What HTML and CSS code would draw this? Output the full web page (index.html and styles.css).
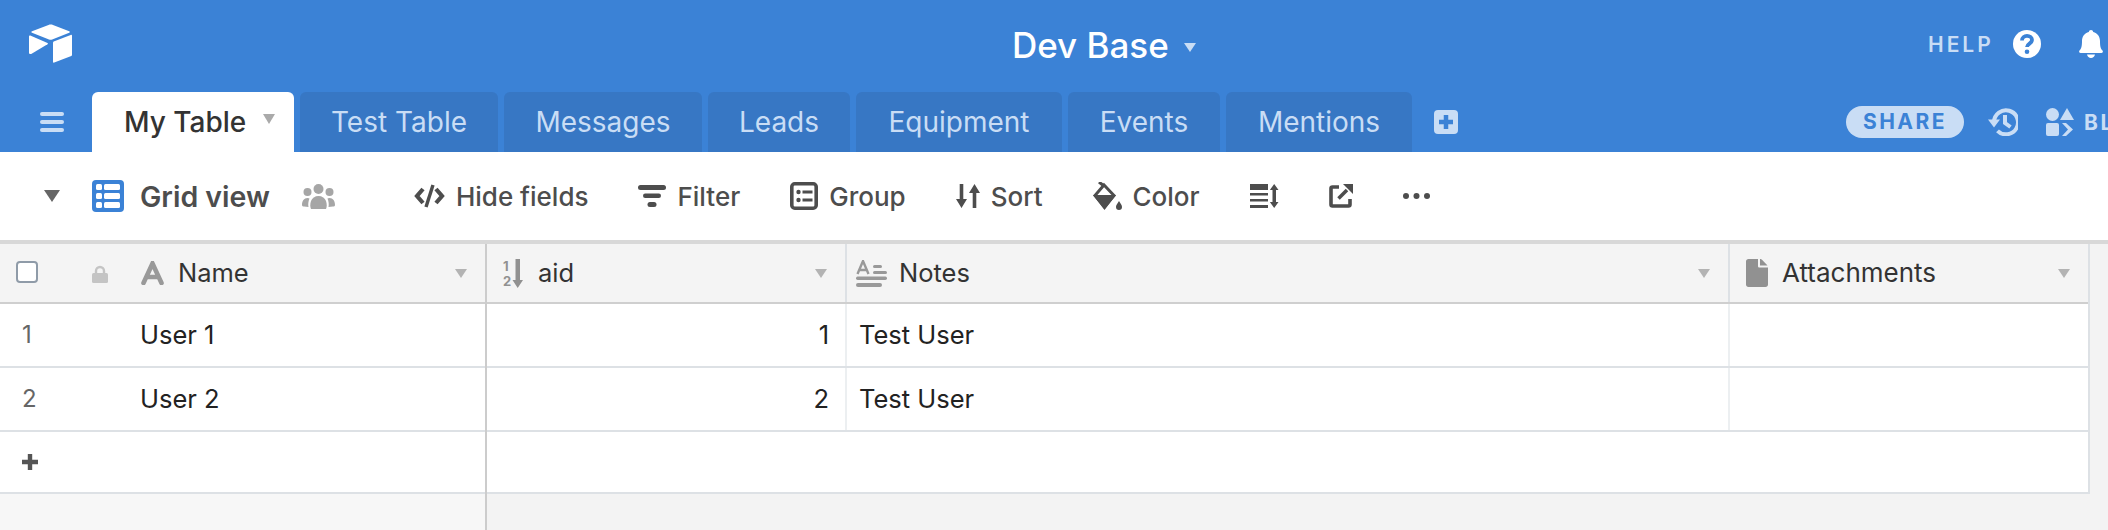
FILE: index.html
```html
<!DOCTYPE html>
<html lang="en">
<head>
  <meta charset="UTF-8">
  <title>Dev Base</title>
  <link rel="stylesheet" href="styles.css">
</head>
<body>
  <header class="topbar">
    <div class="topbar-main">
      <svg class="logo" viewBox="0 0 44 40"><path fill="#fff" d="M19.500 1 3 7.200c-.8.300-.8 1.300 0 1.600l17 6.600c1 .4 2.200.4 3.200 0l17-6.600c.8-.3.8-1.300 0-1.600L24 1c-1.500-.6-3-.6-4.500 0z"/><path fill="#fff" d="M24 18.500v19.200c0 .7.700 1.100 1.300.9l17-6.600c.4-.2.700-.5.700-1V11.800c0-.7-.7-1.100-1.300-.9l-17 6.600c-.4.2-.7.500-.7 1z"/><path fill="#fff" d="M1.300 11.500 18.500 19c.5.300.5 1 0 1.300L2.200 29.900c-.8.400-2.200-.1-2.200-1V12.300c0-.6.700-1 1.300-.8z"/></svg>
      <div class="base-title">Dev Base <span class="caret caret-light"></span></div>
      <div class="topbar-right">
        <span class="help-label">HELP</span>
        <svg class="help-icon" viewBox="0 0 28 28"><circle cx="14" cy="14" r="14" fill="#fff"/><path fill="none" stroke="#3b82d6" stroke-width="3.800" d="M9 10.500c0-3 2.300-4.600 5-4.600s5 1.600 5 4.200c0 3.500-5 3.500-5 7"/><circle cx="14" cy="21.800" r="2.300" fill="#3b82d6"/></svg>
        <svg class="bell-icon" viewBox="0 0 24 28"><path fill="#fff" d="M12 0c1.300 0 2 .8 2.200 2C18.500 3 21 6.600 21 11c0 5 .6 7.500 2.500 9.500.7.800.5 2.500-1 2.500H1.500c-1.500 0-1.700-1.700-1-2.500C2.400 18.500 3 16 3 11c0-4.400 2.500-8 6.800-9C10 .8 10.700 0 12 0zM8 24.500h8c-.5 2-2 3.500-4 3.500s-3.500-1.500-4-3.500z"/></svg>
      </div>
    </div>
    <div class="topbar-tabs">
      <svg class="menu-icon" viewBox="0 0 24 20"><g fill="#c9ddf5"><rect y="0" width="24" height="4" rx="2"/><rect y="8" width="24" height="4" rx="2"/><rect y="16" width="24" height="4" rx="2"/></g></svg>
      <nav class="tabs">
        <div class="tab tab-active">My Table <span class="caret caret-tab"></span></div>
        <div class="tab tab-test">Test Table</div>
        <div class="tab tab-messages">Messages</div>
        <div class="tab tab-leads">Leads</div>
        <div class="tab tab-equipment">Equipment</div>
        <div class="tab tab-events">Events</div>
        <div class="tab tab-mentions">Mentions</div>
      </nav>
      <svg class="add-tab" viewBox="0 0 24 24"><rect width="24" height="24" rx="4" fill="#c9ddf5"/><path d="M12 5v14M5 12h14" stroke="#3b82d6" stroke-width="4.500"/></svg>
      <div class="tabs-right">
        <span class="share-pill">SHARE</span>
        <svg class="history-icon" viewBox="0 0 30 28"><g fill="none" stroke="#c9ddf5" stroke-width="4"><path d="M6 14a12 12 0 1 1 3.500 8.800"/><path d="M17 7v8l5.500 4"/></g><path fill="#c9ddf5" d="M0 11.500h12l-6 8z"/></svg>
        <svg class="blocks-icon" viewBox="0 0 28 28"><g fill="#c9ddf5"><circle cx="6.500" cy="6.500" r="6.500"/><path d="M21 0l7 12H14z"/><rect y="15" width="13" height="13" rx="2"/><path d="M16 15h4l7 6.500-7 6.500h-4l6-6.500z"/></g></svg>
        <span class="blocks-label">BLOCKS</span>
      </div>
    </div>
  </header>

  <section class="toolbar">
    <span class="caret caret-view"></span>
    <svg class="grid-icon" viewBox="0 0 32 32"><rect width="32" height="32" rx="4" fill="#3b82d6"/><g fill="#fff"><rect x="4" y="4" width="6" height="6" rx="1.500"/><rect x="12" y="4" width="16" height="6" rx="1.500"/><rect x="4" y="13" width="6" height="6" rx="1.500"/><rect x="12" y="13" width="16" height="6" rx="1.500"/><rect x="4" y="22" width="6" height="6" rx="1.500"/><rect x="12" y="22" width="16" height="6" rx="1.500"/></g></svg>
    <span class="view-name">Grid view</span>
    <svg class="people-icon" viewBox="0 0 33 25"><g fill="#a6a6a6"><circle cx="16.500" cy="5" r="5"/><circle cx="5.500" cy="8" r="4"/><circle cx="27.500" cy="8" r="4"/><path d="M9 25c-1-2-1-5 0-8 1-3 4-5 7.500-5s6.500 2 7.500 5c1 3 1 6 0 8z"/><path d="M0 21c0-4 2-7 5.500-7 1 0 1.500.2 2 .5-1.300 3-1.500 6-1 8.500L2 22.500C1 22.500 0 22 0 21zM33 21c0-4-2-7-5.500-7-1 0-1.500.2-2 .5 1.300 3 1.500 6 1 8.500l4.500-.5c1 0 2-.5 2-1.500z"/></g></svg>
    <div class="tools">
      <div class="tool">
        <svg class="tool-icon" width="31" height="24" viewBox="0 0 31 24"><g fill="none" stroke="#4d4d4d" stroke-width="4.200"><path d="M9 5 3 12l6 7M22 5l6 7-6 7"/><path d="M19 1 12 23" stroke-width="3.400"/></g></svg>
        Hide fields
      </div>
      <div class="tool">
        <svg class="tool-icon" width="28" height="22" viewBox="0 0 28 22"><g fill="#4d4d4d"><rect width="28" height="5" rx="2.500"/><rect x="5" y="8.500" width="18" height="4.500" rx="2.200"/><rect x="9.500" y="17" width="9" height="5" rx="2.500"/></g></svg>
        Filter
      </div>
      <div class="tool">
        <svg class="tool-icon" width="28" height="28" viewBox="0 0 28 28"><rect x="1.800" y="1.800" width="24.400" height="24.400" rx="3" fill="none" stroke="#4d4d4d" stroke-width="3.600"/><g fill="#4d4d4d"><circle cx="8.500" cy="10" r="2.200"/><circle cx="8.500" cy="18" r="2.200"/><rect x="12.500" y="8.500" width="10" height="3"/><rect x="12.500" y="16.500" width="10" height="3"/></g></svg>
        Group
      </div>
      <div class="tool">
        <svg class="tool-icon" width="24" height="24" viewBox="0 0 24 24"><g fill="#4d4d4d"><path d="M3.700 0h3.600v15H11l-5.500 9L0 15h3.700z"/><path d="M16.700 24h3.600V9H24L18.500 0 13 9h3.700z"/></g></svg>
        Sort
      </div>
      <div class="tool">
        <svg class="tool-icon" width="29" height="28" viewBox="0 0 29 28"><path fill="none" stroke="#4d4d4d" stroke-width="3" d="M6 0l5 4"/><path fill="none" stroke="#4d4d4d" stroke-width="3" d="M11 3 2 13.500 11.500 25 21 13.500z"/><path fill="#4d4d4d" d="M0 13h23L11.500 28zM26 19c1.500 2.500 3 4 3 6a3 3 0 0 1-6 0c0-2 1.500-3.500 3-6z"/></svg>
        Color
      </div>
      <div class="tool">
        <svg class="tool-icon" width="29" height="24" viewBox="0 0 29 24"><g fill="#4d4d4d"><rect width="18" height="6"/><rect y="9" width="18" height="2.500"/><rect y="15" width="18" height="2.500"/><rect y="21" width="18" height="3"/><rect x="22.500" y="3" width="3.500" height="18"/><path d="M24.200 0l4.300 6h-8.600zM24.200 24l4.300-6h-8.600z"/></g></svg>
      </div>
      <div class="tool">
        <svg class="tool-icon" width="24" height="24" viewBox="0 0 24 24"><path fill="none" stroke="#4d4d4d" stroke-width="3.600" d="M10 3H3.500C2.500 3 2 3.500 2 4.500v16c0 1 .5 1.500 1.500 1.500h16c1 0 1.500-.5 1.500-1.500V15"/><path fill="none" stroke="#4d4d4d" stroke-width="3.600" d="M9.500 14.500 18 6"/><path fill="#4d4d4d" d="M14 0h10v10z"/></svg>
      </div>
      <div class="tool">
        <svg class="tool-icon" width="27" height="6" viewBox="0 0 27 6"><g fill="#4d4d4d"><circle cx="3" cy="3" r="3"/><circle cx="13.500" cy="3" r="3"/><circle cx="24" cy="3" r="3"/></g></svg>
      </div>
    </div>
  </section>

  <main class="grid">
    <div class="pane pane-left">
      <div class="row head-row">
        <span class="checkbox"></span>
        <svg class="lock" viewBox="0 0 16 18"><path fill="none" stroke="#c4c4c4" stroke-width="2.400" d="M4 9V6a4 4 0 0 1 8 0v3"/><rect y="8" width="16" height="10" rx="1.500" fill="#c4c4c4"/></svg>
        <svg class="col-icon icon-a" viewBox="0 0 23 24"><path fill="none" stroke="#999" stroke-width="4.600" stroke-linecap="round" d="M2.500 22 11.500 2.500 20.500 22M6.500 16h10"/></svg>
        <span class="col-name">Name</span>
        <span class="caret caret-col"></span>
      </div>
      <div class="row body-row">
        <span class="row-num">1</span>
        <span class="cell-text primary-text">User 1</span>
      </div>
      <div class="row body-row">
        <span class="row-num">2</span>
        <span class="cell-text primary-text">User 2</span>
      </div>
      <div class="row add-row">
        <svg class="add-record" viewBox="0 0 16 16"><path stroke="#555" stroke-width="4.400" d="M8 0v16M0 8h16"/></svg>
      </div>
    </div>
    <div class="pane pane-right">
      <div class="row head-row">
        <div class="col col-aid">
          <svg class="col-icon icon-num" viewBox="0 0 21 29"><g fill="#919191"><text x="1" y="12" class="num-glyph">1</text><text x="1" y="27" class="num-glyph">2</text><path d="M13.500 0h4.500v21h3l-5.300 8-5.200-8h3z"/></g></svg>
          <span class="col-name">aid</span>
          <span class="caret caret-col"></span>
        </div>
        <div class="col col-notes">
          <svg class="col-icon icon-notes" viewBox="0 0 31 27"><path fill="none" stroke="#999" stroke-width="2.400" d="M1.500 14 7 1l5.500 13M3.500 10h7"/><g fill="#999"><rect x="17" y="5" width="9" height="3" rx="1.500"/><rect x="17" y="11" width="14" height="3" rx="1.500"/><rect y="16.500" width="31" height="3.500" rx="1.700"/><rect y="23" width="26" height="4" rx="2"/></g></svg>
          <span class="col-name">Notes</span>
          <span class="caret caret-col"></span>
        </div>
        <div class="col col-files">
          <svg class="col-icon icon-file" viewBox="0 0 22 28"><path fill="#919191" d="M2.500 0H12v7c0 1 .5 1.500 1.500 1.500H22V25.500c0 1.500-1 2.500-2.500 2.500h-17C1 28 0 27 0 25.500v-23C0 1 1 0 2.500 0zM14 0c1 0 1.500.3 2 .8l5.500 5.700H14z"/></svg>
          <span class="col-name col-name-wide">Attachments</span>
          <span class="caret caret-col"></span>
        </div>
      </div>
      <div class="row body-row">
        <div class="col col-aid cell-num">1</div>
        <div class="col col-notes cell-text">Test User</div>
        <div class="col col-files"></div>
      </div>
      <div class="row body-row">
        <div class="col col-aid cell-num">2</div>
        <div class="col col-notes cell-text">Test User</div>
        <div class="col col-files"></div>
      </div>
      <div class="row add-row"></div>
    </div>
  </main>
</body>
</html>
```
FILE: styles.css
```css
* {
  box-sizing: border-box;
}

html, body {
  margin: 0;
  height: 100%;
  overflow: hidden;
}

body {
  width: 2108px;
  height: 530px;
  font-family: Inter, "Liberation Sans", sans-serif;
  background: #f3f3f3;
  color: #222;
}

svg {
  display: block;
  flex-shrink: 0;
}

.caret {
  display: inline-block;
  width: 0;
  height: 0;
  border-style: solid;
  border-color: #aaa transparent transparent;
}

/* top blue bar */
.topbar {
  height: 152px;
  background: #3b82d6;
}

.topbar-main {
  height: 92px;
  display: flex;
  align-items: center;
  justify-content: center;
  position: relative;
}

.logo {
  position: absolute;
  left: 28px;
  top: 24px;
  width: 46px;
  height: 40px;
}

.base-title {
  margin-left: 100px;
  padding-bottom: 3px;
  font-size: 35px;
  font-weight: 500;
  color: #fff;
}

.caret-light {
  margin-left: 6px;
  border-width: 9px 6px 0;
  border-top-color: #c9ddf5;
  vertical-align: 6px;
}

.topbar-right {
  position: absolute;
  left: 1928px;
  top: 30px;
  display: flex;
  align-items: center;
  height: 28px;
}

.help-label {
  font-size: 21px;
  font-weight: 600;
  letter-spacing: 3px;
  color: #c9ddf5;
}

.help-icon {
  width: 28px;
  height: 28px;
  margin-left: 19px;
}

.bell-icon {
  width: 24px;
  height: 28px;
  margin-left: 38px;
}

.topbar-tabs {
  height: 60px;
  display: flex;
  align-items: flex-end;
}

.menu-icon {
  width: 24px;
  height: 20px;
  margin: 0 28px 20px 40px;
}

.tabs {
  display: flex;
  gap: 6px;
  height: 60px;
}

.tab {
  display: flex;
  align-items: center;
  justify-content: center;
  font-size: 28px;
  color: #c9ddf5;
  background: #3777c4;
  border-radius: 6px 6px 0 0;
}

.tab-active {
  width: 202px;
  color: #333;
  background: #fff;
  font-weight: 500;
  justify-content: flex-start;
  padding-left: 32px;
}

.caret-tab {
  margin: 0 0 6px 17px;
  border-width: 10px 6px 0;
}

.tab-test { width: 198px; }
.tab-messages { width: 198px; }
.tab-leads { width: 142px; }
.tab-equipment { width: 206px; }
.tab-events { width: 152px; }
.tab-mentions { width: 186px; }

.add-tab {
  width: 24px;
  height: 24px;
  margin: 0 0 18px 22px;
}

.tabs-right {
  margin-left: 388px;
  margin-bottom: 14px;
  display: flex;
  align-items: center;
  white-space: nowrap;
}

.share-pill {
  width: 118px;
  height: 32px;
  line-height: 32px;
  text-align: center;
  border-radius: 16px;
  background: #c9ddf5;
  color: #3b82d6;
  font-size: 21px;
  font-weight: 700;
  letter-spacing: 2.5px;
}

.history-icon {
  width: 30px;
  height: 28px;
  margin-left: 24px;
}

.blocks-icon {
  width: 28px;
  height: 28px;
  margin-left: 28px;
}

.blocks-label {
  margin-left: 10px;
  font-size: 21px;
  font-weight: 700;
  letter-spacing: 2.5px;
  color: #c9ddf5;
}

/* view toolbar */
.toolbar {
  height: 92px;
  display: flex;
  align-items: center;
  background: #fff;
  border-bottom: 4px solid #d8d8d8;
  color: #4d4d4d;
  font-size: 26px;
  font-weight: 500;
}

.caret-view {
  margin-left: 44px;
  border-width: 12px 8px 0;
  border-top-color: #666;
}

.grid-icon {
  width: 32px;
  height: 32px;
  margin-left: 32px;
}

.view-name {
  margin-left: 16px;
  font-size: 28.5px;
  font-weight: 600;
}

.people-icon {
  width: 33px;
  height: 25px;
  margin-left: 32px;
}

.tools {
  display: flex;
  align-items: center;
  gap: 50px;
  margin-left: 79px;
}

.tool {
  display: flex;
  align-items: center;
  gap: 11px;
  white-space: nowrap;
}

/* the table */
.grid {
  display: flex;
  height: 286px;
}

.pane-left {
  width: 487px;
  border-right: 2px solid #cccccc;
  background: #f7f7f7;
}

.pane-right {
  width: 1603px;
  border-right: 2px solid #dde1e5;
  height: 250px;
  flex-shrink: 0;
  background: #fff;
}

.row {
  display: flex;
  align-items: stretch;
  background: #fff;
  border-bottom: 2px solid #dde1e5;
}

.head-row {
  height: 60px;
  align-items: center;
  background: #f4f4f4;
  border-bottom-color: #cfcfcf;
  font-size: 25.5px;
  color: #333;
}

.body-row {
  height: 64px;
  align-items: center;
  font-size: 25.5px;
}

.add-row {
  height: 62px;
}

.col {
  height: 100%;
  display: flex;
  align-items: center;
  border-right: 2px solid #eceff1;
}

.head-row .col {
  border-right-color: #dde1e5;
}

.col-aid {
  width: 360px;
  padding-left: 15px;
}

.col-notes {
  width: 883px;
  padding-left: 12px;
}

.head-row .col-notes {
  padding-left: 9px;
}

.col-files {
  width: 358px;
  padding-left: 16px;
  border-right: 0;
}

.col-name-wide {
  font-size: 26px;
}

.cell-text,
.row-num {
  padding-bottom: 2px;
}

.cell-num {
  justify-content: flex-end;
  padding: 0 16px 2px 0;
}

.row-num {
  width: 140px;
  padding-left: 22px;
  font-size: 24px;
  color: #666;
}

.checkbox {
  width: 22px;
  height: 22px;
  margin: 0 0 2px 16px;
  border: 2px solid #8f9ba8;
  border-radius: 4px;
  background: #fff;
}

.lock {
  width: 16px;
  height: 18px;
  margin-left: 54px;
  margin-top: 2px;
}

.col-icon {
  margin-right: 14px;
}

.icon-a {
  width: 23px;
  height: 24px;
  margin-left: 33px;
}

.icon-num {
  width: 21px;
  height: 29px;
  margin-right: 15px;
}

.icon-notes {
  width: 31px;
  height: 27px;
  margin-right: 12px;
}

.icon-file {
  width: 22px;
  height: 28px;
  margin-right: 14px;
}

.num-glyph {
  font-size: 13px;
  font-weight: 700;
}

.col-name {
  flex: 1;
  padding-bottom: 2px;
}

.caret-col {
  margin-right: 18px;
  border-width: 9px 6px 0;
  border-top-color: #b3b3b3;
}

.add-record {
  width: 16px;
  height: 16px;
  margin: 22px 0 0 22px;
}
```
